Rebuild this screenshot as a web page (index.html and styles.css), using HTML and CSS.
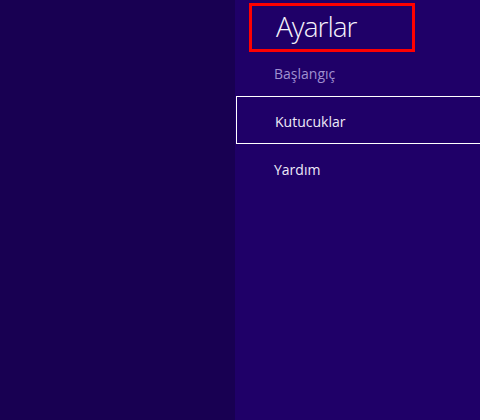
FILE: index.html
```html
<!DOCTYPE html>
<html lang="tr">
<head>
    <meta charset="UTF-8">
    <title>Ayarlar</title>
    <link rel="stylesheet" href="styles.css">
</head>
<body>
    <div class="side"></div>
    <div class="pane">
        <div class="title-box">
            <h1 class="title">Ayarlar</h1>
        </div>
        <ul class="menu">
            <li class="menu-item muted">Başlangıç</li>
            <li class="menu-item selected">Kutucuklar</li>
            <li class="menu-item">Yardım</li>
        </ul>
    </div>
</body>
</html>
```

FILE: styles.css
```css
html, body {
    height: 100%;
}

body {
    margin: 0;
    display: flex;
    background-color: #180052;
    font-family: 'Open Sans', 'Noto Sans', sans-serif;
    color: #eeeaf8;
    overflow: hidden;
}

.side {
    width: 235px;
    flex-shrink: 0;
    background-color: #180052;
}

.pane {
    flex: 1;
    background-color: #1f0068;
    padding-top: 3px;
}

.title-box {
    margin-left: 14px;
    width: 160px;
    height: 43px;
    border: 3px solid #ff0000;
    display: flex;
    align-items: center;
}

.title {
    margin: 0 0 3px 24px;
    font-size: 28px;
    font-weight: 300;
    letter-spacing: -1px;
    line-height: 1;
    color: #f4f2fb;
}

.menu {
    list-style: none;
    margin: -4px 0 0;
    padding: 0;
}

.menu-item {
    height: 48px;
    display: flex;
    align-items: center;
    padding: 3px 0 0 39px;
    font-size: 14px;
    box-sizing: border-box;
}

.menu-item.muted {
    color: #a090d0;
}

.menu-item.selected {
    margin-left: 1px;
    padding-left: 38px;
    border: 1px solid #ffffff;
    border-right: none;
}
```
